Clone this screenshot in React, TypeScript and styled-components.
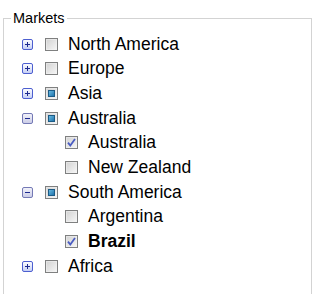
import React from 'react';
import styled, { createGlobalStyle } from 'styled-components';

type CheckState = 'off' | 'on' | 'mixed';
interface Node {
  label: string;
  state: CheckState;
  bold?: boolean;
  children?: Node[];
  open?: boolean;
}

const markets: Node[] = [
  { label: 'North America', state: 'off', children: [] },
  { label: 'Europe', state: 'off', children: [] },
  { label: 'Asia', state: 'mixed', children: [] },
  {
    label: 'Australia',
    state: 'mixed',
    open: true,
    children: [
      { label: 'Australia', state: 'on' },
      { label: 'New Zealand', state: 'off' },
    ],
  },
  {
    label: 'South America',
    state: 'mixed',
    open: true,
    children: [
      { label: 'Argentina', state: 'off' },
      { label: 'Brazil', state: 'on', bold: true },
    ],
  },
  { label: 'Africa', state: 'off', children: [] },
];

const GlobalStyle = createGlobalStyle`
  html, body {
    margin: 0;
    padding: 0;
    overflow: hidden;
    background: #fff;
  }
  body {
    font-family: "Liberation Sans", Arial, sans-serif;
  }
`;

const Fieldset = styled.fieldset`
  margin: 10px 0 0 3px;
  width: 309px;
  box-sizing: border-box;
  height: 285px;
  border: 1px solid #d3d3d3;
  padding: 6px 0 0 18px;
`;

const Legend = styled.legend`
  font-size: 14.5px;
  color: #000;
  padding: 0 2px;
  margin-left: -11px;
`;

const List = styled.ul<{ $indent: number }>`
  list-style: none;
  margin: 0;
  padding: 0 0 0 ${(p) => p.$indent}px;
`;

const Row = styled.li`
  display: flex;
  align-items: center;
  height: 24.67px;
`;

const ToggleSlot = styled.span`
  width: 23px;
  flex: none;
  display: flex;
  align-items: center;
`;

const Label = styled.span<{ $bold?: boolean }>`
  font-size: 17.5px;
  color: #000;
  font-weight: ${(p) => (p.$bold ? 700 : 400)};
  margin-left: 10px;
  white-space: nowrap;
`;

const Expander: React.FC<{ open?: boolean }> = ({ open }) => (
  <svg width="11" height="11" viewBox="0 0 11 11">
    <defs>
      <linearGradient id={open ? 'exo' : 'exc'} x1="0" y1="0" x2="0" y2="1">
        <stop offset="0" stopColor={open ? '#f4f4fb' : '#ffffff'} />
        <stop offset="1" stopColor={open ? '#c9cbe6' : '#c3cdf4'} />
      </linearGradient>
    </defs>
    <rect
      x="0.5"
      y="0.5"
      width="10"
      height="10"
      rx="1.5"
      fill={`url(#${open ? 'exo' : 'exc'})`}
      stroke={open ? '#7479b5' : '#4d5fd0'}
    />
    <rect x="3" y="5" width="5" height="1" fill="#1d2a8f" />
    {!open && <rect x="5" y="3" width="1" height="5" fill="#1d2a8f" />}
  </svg>
);

const Check: React.FC<{ state: CheckState }> = ({ state }) => (
  <svg width="13" height="13" viewBox="0 0 13 13" style={{ flex: 'none' }}>
    <defs>
      <linearGradient id="cbg" x1="0" y1="0" x2="1" y2="1">
        <stop offset="0" stopColor="#d0d0d0" />
        <stop offset="1" stopColor="#f8f8f8" />
      </linearGradient>
      <linearGradient id="cbm" x1="0" y1="0" x2="1" y2="1">
        <stop offset="0" stopColor="#6fc0e6" />
        <stop offset="1" stopColor="#1a6ea8" />
      </linearGradient>
    </defs>
    <rect x="0.5" y="0.5" width="12" height="12" fill="url(#cbg)" stroke="#7f8080" />
    <rect x="1.5" y="1.5" width="10" height="10" fill="none" stroke="#f4f4f4" strokeOpacity="0.5" />
    {state === 'mixed' && (
      <rect x="3.5" y="3.5" width="6" height="6" fill="url(#cbm)" stroke="#1c5b86" />
    )}
    {state === 'on' && (
      <path d="M3 6.6 L5.3 9.5 L10 3" fill="none" stroke="#4a5cc2" strokeWidth="1.8" />
    )}
  </svg>
);

const TreeRows: React.FC<{ nodes: Node[]; indent: number }> = ({ nodes, indent }) => (
  <List $indent={indent}>
    {nodes.map((n, i) => (
      <React.Fragment key={n.label + i}>
        <Row>
          <ToggleSlot>{n.children && <Expander open={n.open} />}</ToggleSlot>
          <Check state={n.state} />
          <Label $bold={n.bold}>{n.label}</Label>
        </Row>
        {n.open && n.children && n.children.length > 0 && (
          <li>
            <TreeRows nodes={n.children} indent={20} />
          </li>
        )}
      </React.Fragment>
    ))}
  </List>
);

const App: React.FC = () => (
  <>
    <GlobalStyle />
    <Fieldset>
      <Legend>Markets</Legend>
      <TreeRows nodes={markets} indent={0} />
    </Fieldset>
  </>
);

export default App;
